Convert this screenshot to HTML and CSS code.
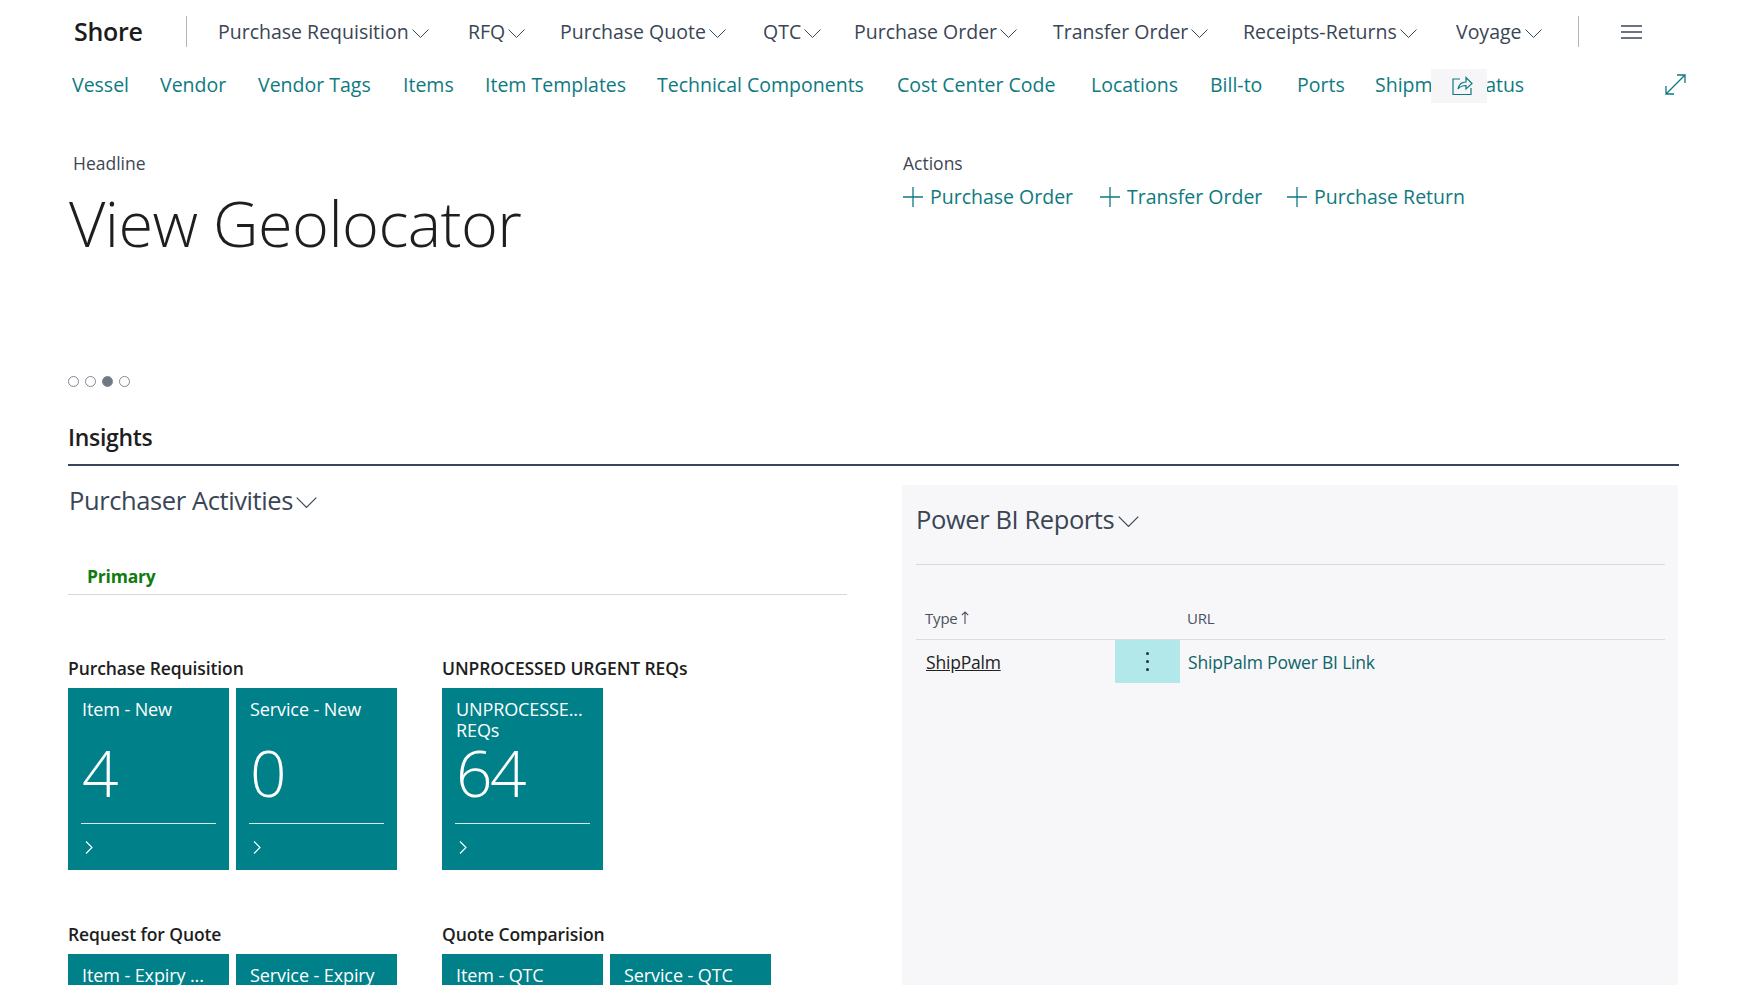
FILE: index.html
```html
<!DOCTYPE html>
<html>
  <head>
    <title>Shore</title>
    <meta charset="utf-8" />
    <link rel="stylesheet" href="styles.css">
  </head>
  <body>
    <svg class="defs" width="0" height="0">
      <symbol id="chev" viewBox="0 0 17 9"><path d="M.5.5 8.5 8.5 16.5.5" fill="none" stroke="currentColor"/></symbol>
      <symbol id="plus" viewBox="0 0 20 20"><path d="M10 0V20M0 10H20" fill="none" stroke="currentColor" stroke-width="1.3"/></symbol>
      <symbol id="go" viewBox="0 0 8 13"><path d="M1 .5 7 6.5 1 12.5" fill="none" stroke="currentColor" stroke-width="1.1"/></symbol>
    </svg>

    <div class="topnav">
      <span class="brand">Shore</span>
      <span class="sep sep-first"></span>
      <a class="menu" style="width:250px">Purchase Requisition <svg class="chev"><use href="#chev"/></svg></a>
      <a class="menu" style="width:92px">RFQ <svg class="chev"><use href="#chev"/></svg></a>
      <a class="menu" style="width:203px">Purchase Quote <svg class="chev"><use href="#chev"/></svg></a>
      <a class="menu" style="width:91px">QTC <svg class="chev"><use href="#chev"/></svg></a>
      <a class="menu" style="width:199px">Purchase Order <svg class="chev"><use href="#chev"/></svg></a>
      <a class="menu" style="width:190px">Transfer Order <svg class="chev"><use href="#chev"/></svg></a>
      <a class="menu" style="width:213px">Receipts-Returns <svg class="chev"><use href="#chev"/></svg></a>
      <a class="menu" style="width:122px">Voyage <svg class="chev"><use href="#chev"/></svg></a>
      <span class="sep"></span>
      <svg class="burger" width="21" height="14" viewBox="0 0 21 14"><path d="M0 1H21M0 7H21M0 13H21" stroke="#3a4556" stroke-width="1.4"/></svg>
    </div>

    <div class="subnav">
      <a style="width:88px">Vessel</a>
      <a style="width:98px">Vendor</a>
      <a style="width:145px">Vendor Tags</a>
      <a style="width:82px">Items</a>
      <a style="width:172px">Item Templates</a>
      <a style="width:240px">Technical Components</a>
      <a style="width:194px">Cost Center Code</a>
      <a style="width:119px">Locations</a>
      <a style="width:87px">Bill-to</a>
      <a style="width:78px">Ports</a>
      <a>Shipment Status</a>
      <span class="share">
        <svg width="22" height="20" viewBox="0 0 22 20"><path d="M9 3H2V18.500H20V12M7 13C8 8 11 6 15 6V1.500L21 7.500 15 13V9.500C11.500 9.500 9 10.500 7 13Z" fill="none" stroke="#0e7a80" stroke-width="1.2"/></svg>
      </span>
      <svg class="expand" width="21" height="21" viewBox="0 0 21 21"><path d="M1 20 20 1M12 1H20V9M1 12V20H9" fill="none" stroke="#0e7a80" stroke-width="1.3"/></svg>
    </div>

    <div class="hero">
      <div>
        <div class="caption">Headline</div>
        <h1>View Geolocator</h1>
      </div>
      <div>
        <div class="caption">Actions</div>
        <div class="actions">
          <a style="width:197px"><svg class="plus"><use href="#plus"/></svg>Purchase Order</a>
          <a style="width:187px"><svg class="plus"><use href="#plus"/></svg>Transfer Order</a>
          <a><svg class="plus"><use href="#plus"/></svg>Purchase Return</a>
        </div>
      </div>
    </div>

    <div class="dots"><i></i><i></i><i class="on"></i><i></i></div>

    <h2>Insights</h2>

    <div class="columns">
      <div class="left">
        <div class="part-title">Purchaser Activities <svg class="chev-big"><use href="#chev"/></svg></div>
        <div class="tab"><b>Primary</b></div>

        <div class="cues">
          <div class="cue-group">
            <h3>Purchase Requisition</h3>
            <div class="tiles">
              <div class="tile"><div class="label">Item - New</div><div class="num">4</div><svg class="go"><use href="#go"/></svg></div>
              <div class="tile"><div class="label">Service - New</div><div class="num">0</div><svg class="go"><use href="#go"/></svg></div>
            </div>
          </div>
          <div class="cue-group">
            <h3>UNPROCESSED URGENT REQs</h3>
            <div class="tiles">
              <div class="tile"><div class="label">UNPROCESSE...<br>REQs</div><div class="num">64</div><svg class="go"><use href="#go"/></svg></div>
            </div>
          </div>
          <div class="cue-group">
            <h3>Request for Quote</h3>
            <div class="tiles">
              <div class="tile"><div class="label">Item - Expiry ...</div></div>
              <div class="tile"><div class="label">Service - Expiry</div></div>
            </div>
          </div>
          <div class="cue-group">
            <h3>Quote Comparision</h3>
            <div class="tiles">
              <div class="tile"><div class="label">Item - QTC</div></div>
              <div class="tile"><div class="label">Service - QTC</div></div>
            </div>
          </div>
        </div>
      </div>

      <div class="right">
        <div class="part-title">Power BI Reports <svg class="chev-big"><use href="#chev"/></svg></div>
        <div class="list-head">
          <span class="col-type">Type <svg width="8" height="13" viewBox="0 0 8 13"><path d="M4 13V1M.8 4.200 4 1 7.200 4.200" fill="none" stroke="#4a5260" stroke-width="1.1"/></svg></span>
          <span>URL</span>
        </div>
        <div class="list-row">
          <a class="type-link">ShipPalm</a>
          <span class="more"><i></i><i></i><i></i></span>
          <a class="url-link">ShipPalm Power BI Link</a>
        </div>
      </div>
    </div>
  </body>
</html>
```

FILE: styles.css
```css
html, body {
  margin: 0;
  height: 985px;
  overflow: hidden;
  background: #fff;
}
body {
  font-family: "Open Sans", "Liberation Sans", sans-serif;
  color: #222;
  position: relative;
}
.defs {
  position: absolute;
}
a {
  color: inherit;
}

/* top menu */
.topnav {
  height: 62px;
  padding: 0 0 2px 74px;
  display: flex;
  align-items: center;
  color: #3a4556;
}
.brand {
  font-size: 25px;
  font-weight: 600;
  color: #1c1c1c;
  width: 112px;
  letter-spacing: -0.3px;
}
.sep {
  width: 1px;
  height: 31px;
  background: #b4b4b4;
}
.sep-first {
  margin-right: 31px;
}
.menu {
  font-size: 19.500px;
  white-space: nowrap;
}
.chev {
  width: 17px;
  height: 9px;
  margin-left: -2px;
  vertical-align: 1px;
}
.burger {
  margin: 2px 0 0 42px;
}

/* second row of links */
.subnav {
  height: 41px;
  padding: 0 0 3px 72px;
  display: flex;
  align-items: center;
  color: #0e7a80;
  font-size: 19.500px;
  white-space: nowrap;
  position: relative;
}
.share {
  position: absolute;
  left: 1431px;
  top: 5px;
  width: 56px;
  height: 34px;
  padding-left: 6px;
  box-sizing: border-box;
  background: #f6f6f8;
  display: flex;
  align-items: center;
  justify-content: center;
}
.expand {
  position: absolute;
  left: 1665px;
  top: 10px;
}

/* headline */
.hero {
  display: grid;
  grid-template-columns: 835px 1fr;
  padding: 44px 0 0 68px;
  height: 224px;
}
.caption {
  font-size: 17.500px;
  line-height: 22px;
  color: #3e4654;
  padding-left: 5px;
}
.hero > div + div .caption {
  padding-left: 0;
}
h1 {
  margin: 9px 0 0 1px;
  font-size: 63px;
  font-weight: 300;
  line-height: 80px;
  color: #1e1e1e;
  letter-spacing: -0.6px;
}
.actions {
  display: flex;
  margin-top: 10px;
  color: #0e7a80;
  font-size: 19.500px;
  line-height: 26px;
  white-space: nowrap;
}
.actions a {
  display: flex;
  align-items: center;
}
.plus {
  width: 20px;
  height: 20px;
  margin-right: 7px;
}

/* carousel dots */
.dots {
  display: flex;
  gap: 6px;
  margin: 0 0 0 68px;
}
.dots i {
  width: 9px;
  height: 9px;
  border: 1px solid #7f8894;
  border-radius: 50%;
}
.dots i.on {
  background: #6f7885;
}

h2 {
  margin: 34px 0 0 68px;
  width: 1611px;
  font-size: 23px;
  font-weight: 600;
  line-height: 32px;
  color: #1e1e1e;
  padding: 0 0 9px;
  box-sizing: border-box;
  height: 45px;
  border-bottom: 2px solid #38455a;
  letter-spacing: -0.3px;
}

/* two columns under the rule */
.columns {
  display: grid;
  grid-template-columns: 779px 776px;
  column-gap: 55px;
  padding-left: 68px;
}
.part-title {
  font-size: 25.500px;
  line-height: 36px;
  color: #3a4556;
  letter-spacing: -0.4px;
}
.chev-big {
  width: 21px;
  height: 11px;
  margin-left: -3px;
  vertical-align: 2px;
}
.left {
  padding-top: 16px;
}
.left > .part-title {
  padding-left: 1px;
}
.tab {
  margin-top: 41px;
  height: 35px;
  padding-left: 19px;
  border-bottom: 1px solid #d8d8d8;
  font-size: 17.500px;
  line-height: 34px;
  color: #107c10;
  letter-spacing: -0.2px;
}
.cues {
  display: grid;
  grid-template-columns: 374px 1fr;
  row-gap: 52px;
  margin-top: 61px;
}
h3 {
  margin: 0 0 8px;
  font-size: 17.500px;
  font-weight: 600;
  line-height: 24px;
  color: #1e1e1e;
  width: fit-content;
  letter-spacing: -0.1px;
}
.tiles {
  display: flex;
  gap: 7px;
}
.tile {
  width: 161px;
  height: 182px;
  box-sizing: border-box;
  background: #008089;
  color: #fff;
  padding: 11px 13px 0 14px;
  position: relative;
}
.label {
  font-size: 18px;
  line-height: 21px;
  white-space: nowrap;
  letter-spacing: -0.1px;
}
.num {
  position: absolute;
  left: 13px;
  right: 13px;
  top: 41px;
  height: 94px;
  border-bottom: 1px solid #d6eaec;
  padding-left: 1px;
  font-size: 64px;
  font-weight: 300;
  line-height: 88px;
  letter-spacing: -2.500px;
}
.go {
  position: absolute;
  left: 17px;
  top: 153px;
  width: 8px;
  height: 13px;
}

/* power bi part */
.right {
  background: #f7f7f9;
  margin-top: 19px;
  height: 520px;
  padding: 0 13px 0 14px;
}
.right > .part-title {
  height: 79px;
  line-height: 68px;
  border-bottom: 1px solid #d9d9db;
}
.list-head {
  display: flex;
  height: 75px;
  align-items: flex-end;
  box-sizing: border-box;
  padding-bottom: 9px;
  border-bottom: 1px solid #dcdcde;
  font-size: 15px;
  line-height: 24px;
  color: #4a5260;
  letter-spacing: -0.2px;
}
.col-type {
  width: 271px;
  padding-left: 9px;
  box-sizing: border-box;
}
.list-row {
  display: flex;
  align-items: center;
  height: 43px;
  font-size: 17.500px;
  letter-spacing: -0.2px;
}
.type-link {
  width: 199px;
  padding-left: 10px;
  box-sizing: border-box;
  color: #222;
  text-decoration: underline;
}
.more {
  width: 65px;
  height: 43px;
  background: #b2e8ea;
  display: flex;
  flex-direction: column;
  align-items: center;
  justify-content: center;
  gap: 5px;
}
.more i {
  width: 3px;
  height: 3px;
  border-radius: 50%;
  background: #22303a;
}
.url-link {
  margin-left: 8px;
  color: #0f6468;
}
```
